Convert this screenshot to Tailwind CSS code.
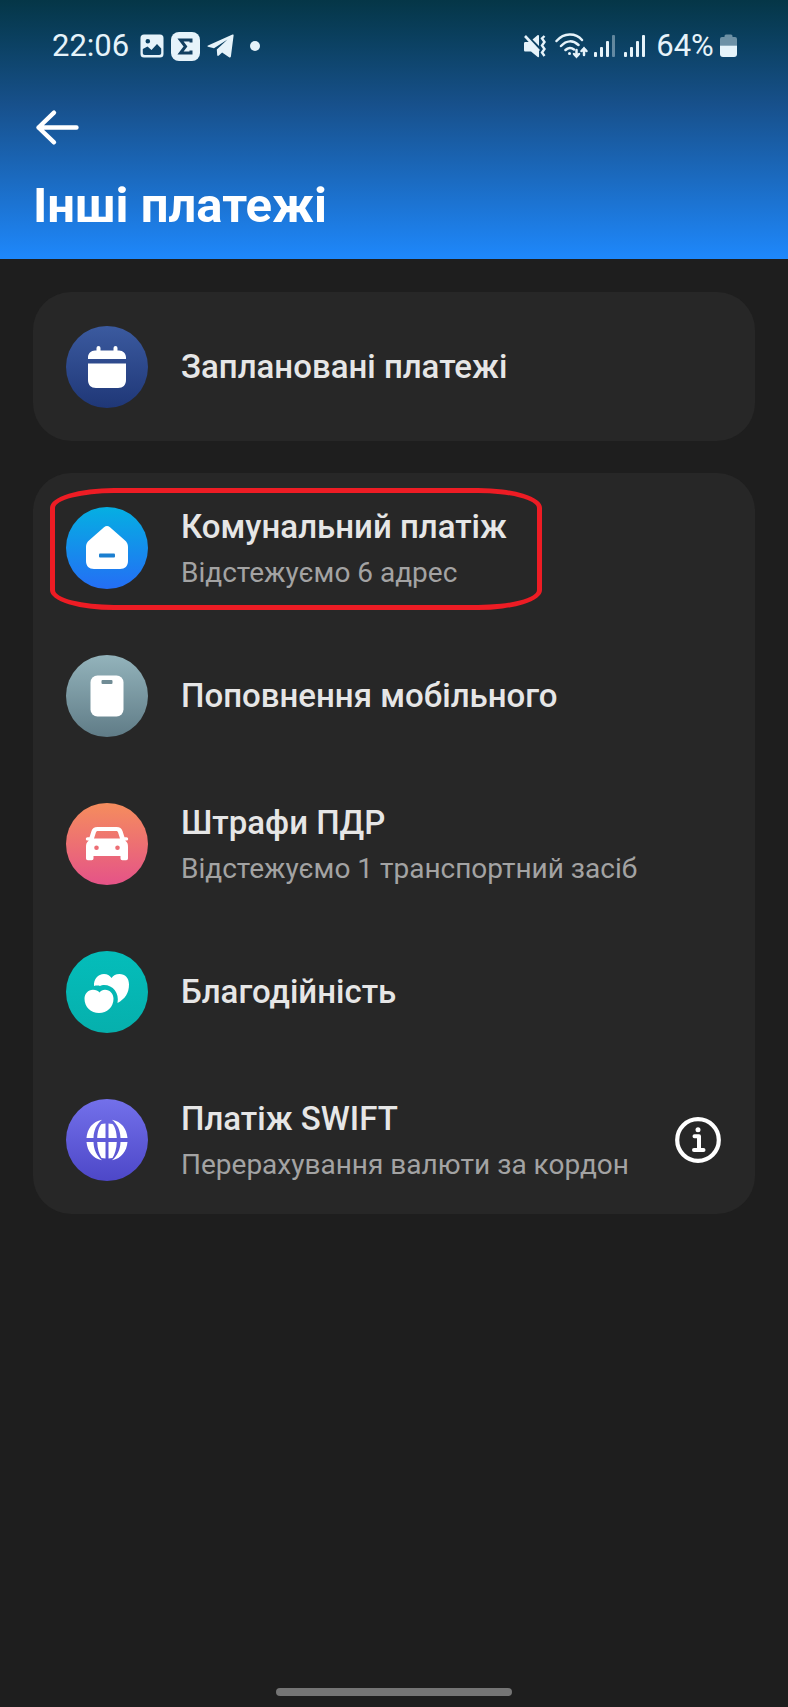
<!DOCTYPE html>
<html lang="uk">
<head>
<meta charset="utf-8">
<meta name="viewport" content="width=device-width, initial-scale=1">
<title>Інші платежі</title>
<script src="https://cdn.jsdelivr.net/npm/@tailwindcss/browser@4"></script>
</head>
<body class="flex min-h-screen flex-col bg-[#1e1e1e] font-[Roboto,sans-serif] text-[#e6e6e6]">

<header class="bg-linear-to-b from-[#053647] via-[#17508b] via-40% to-[#1e88fc] px-[33px] pb-[23px] text-white">
  <div class="flex h-[92px] items-center justify-between pr-[18px] pl-[19px] text-[#e6f3fa]">
    <div class="flex items-center">
      <span class="w-[88px] text-[31px] leading-9">22:06</span>
      <svg class="h-6 w-6" viewBox="0 0 24 24" aria-hidden="true"><path fill="currentColor" fill-rule="evenodd" d="M4 .5h16A3.500 3.500 0 0 1 23.500 4v16a3.500 3.500 0 0 1-3.500 3.500H4A3.500 3.500 0 0 1 .5 20V4A3.500 3.500 0 0 1 4 .5ZM7.800 5a2.300 2.300 0 1 0 .01 4.600A2.300 2.300 0 0 0 7.800 5ZM2.800 15v4c0 1.300.8 2 2 2h14.400c1.200 0 2-.7 2-2v-4.500L17 10l-5.500 6L7.500 12.500Z"/></svg>
      <span class="ml-[7px] flex h-[29px] w-[29px] items-center justify-center rounded-lg bg-current">
        <svg class="h-[19px] w-[19px]" viewBox="0 0 19 19" aria-hidden="true"><path d="M15 5.500V3H4.500l5 6.500-5 6.500H15v-2.500" fill="none" stroke="#123f60" stroke-width="3"/></svg>
      </span>
      <svg class="ml-[7px] h-6 w-[27px]" viewBox="0 0 27 24" fill="currentColor" aria-hidden="true"><path d="M1 11.500 25.500.6c.7-.3 1.300.2 1.100 1l-2.700 20.800c-.2 1-1 1.300-1.800.8l-7-4.600-3.200 2.900c-.9.700-1.600.4-1.700-.5L9.800 15.500 20.500 5.500 7 14.200 1 12.700c-.7-.3-.7-.9 0-1.200Z"/></svg>
      <span class="ml-4 h-[10px] w-[10px] rounded-full bg-current"></span>
    </div>
    <div class="flex items-center">
      <svg class="h-6 w-6" viewBox="0 0 24 24" fill="none" stroke="currentColor" aria-hidden="true"><path fill="currentColor" stroke="none" d="M1 9.500C1 8.500 1.500 8 2.500 8H7l9 9v5.500c0 .8-.7 1-1.300.5L8 17.500H2.500C1.500 17.500 1 17 1 16ZM9.500 5.500l5-4.200c.8-.6 1.500-.3 1.500.7v10Z"/><path d="m2 2 14 15" stroke-width="2.600"/><path d="M21.500 2 19 4.500 21.500 8 19 11.500l2.500 3.500-2.500 3.500 2.500 3.500" stroke-width="2.400"/></svg>
      <svg class="ml-2 h-[26px] w-[34px]" viewBox="0 0 34 26" fill="none" stroke="currentColor" stroke-width="2.500" stroke-linecap="round" aria-hidden="true"><path d="M1.500 8C9-.5 20.500-.5 27 7M6 13c5.500-6 12-6 17.500-1M10.500 17c2.500-2.500 6-2.500 8.500-.5"/><circle cx="14.500" cy="20.500" r="1.500" fill="currentColor" stroke="none"/><path d="M21.500 17v6.500m-2.500-2.500 2.500 2.700 2.500-2.700M29 22v-6.500m-2.500 2.500 2.500-2.700 2.500 2.700"/></svg>
      <svg class="ml-[5px] h-[22px] w-[21px]" viewBox="0 0 21 22" fill="currentColor" aria-hidden="true"><rect y="17" width="3" height="5" rx="1"/><rect x="6" y="12" width="3" height="10" rx="1"/><rect x="12" y="6" width="3" height="16" rx="1"/><rect x="18" width="3" height="22" rx="1" opacity=".4"/></svg>
      <svg class="ml-[9px] h-[22px] w-[21px]" viewBox="0 0 21 22" fill="currentColor" aria-hidden="true"><rect y="17" width="3" height="5" rx="1"/><rect x="6" y="12" width="3" height="10" rx="1"/><rect x="12" y="6" width="3" height="16" rx="1"/><rect x="18" width="3" height="22" rx="1"/></svg>
      <span class="ml-2 w-16 text-center text-[31px] leading-9">64%</span>
      <svg class="ml-[3px] h-6 w-[17px]" viewBox="0 0 17 24" fill="currentColor" aria-hidden="true"><path opacity=".45" d="M4.500 2A1.500 1.500 0 0 1 6 .5h5A1.500 1.500 0 0 1 12.500 2v1H15a2 2 0 0 1 2 2v6.500H0V5a2 2 0 0 1 2-2h2.500Z"/><path d="M0 11.500h17V20a3 3 0 0 1-3 3H3a3 3 0 0 1-3-3Z"/></svg>
    </div>
  </div>
  <button type="button" aria-label="Назад" class="mt-2 flex h-14 w-14 items-center">
    <svg class="h-12 w-12" viewBox="0 0 48 48" fill="none" stroke="currentColor" stroke-width="4.400" stroke-linecap="round" stroke-linejoin="round" aria-hidden="true"><path d="M43.500 23.500H5.500M21 8.700l-15.500 14.800L21 38.300"/></svg>
  </button>
  <h1 class="mt-5 text-[49px] leading-[60px] font-bold">Інші платежі</h1>
</header>

<main class="flex flex-1 flex-col gap-8 px-[33px] pt-[33px]">
  <section class="rounded-[38px] bg-[#272727] pt-px">
    <a href="#scheduled" class="flex h-[148px] items-center gap-[33px] px-[33px]">
      <svg class="h-[82px] w-[82px] shrink-0" viewBox="0 0 82 82" aria-hidden="true">
        <defs><linearGradient id="g1" x2="0" y2="1"><stop stop-color="#3b5a9f"/><stop offset="1" stop-color="#1f3777"/></linearGradient></defs>
        <circle cx="41" cy="41" r="41" fill="url(#g1)"/>
        <path fill="#fff" d="M22 33v-1.500c0-4 3-7 7-7h1.500V22a2 2 0 0 1 4 0v2.500h13V22a2 2 0 0 1 4 0v2.500H53c4 0 7 3 7 7V33ZM22 37.500h38V54c0 5-3 8-8 8H30c-5 0-8-3-8-8Z"/>
      </svg>
      <span class="text-[33px] leading-10 font-medium">Заплановані платежі</span>
    </a>
  </section>

  <section class="rounded-[38px] bg-[#272727] pt-px">
    <ul>
      <li class="relative">
        <a href="#utilities" class="flex h-[148px] items-center gap-[33px] px-[33px]">
          <svg class="h-[82px] w-[82px] shrink-0" viewBox="0 0 82 82" aria-hidden="true">
            <defs><linearGradient id="g2" x2="0" y2="1"><stop stop-color="#05afe2"/><stop offset="1" stop-color="#246ef5"/></linearGradient></defs>
            <circle cx="41" cy="41" r="41" fill="url(#g2)"/>
            <path fill="#fff" d="M38 20.300c2-1.700 4-1.700 6 0L58.500 33c2.500 2 3.500 4 3.500 7v14c0 5-3 8-8 8H28c-5 0-8-3-8-8V40c0-3 1-5 3.500-7Z"/>
            <rect x="33" y="46.500" width="16" height="4" rx="1" fill="#1b7fd0"/>
          </svg>
          <span class="flex flex-col gap-1.5 pt-1">
            <span class="text-[33px] leading-10 font-medium">Комунальний платіж</span>
            <span class="text-[28px] leading-10 text-[#a3a3a3]">Відстежуємо 6 адрес</span>
          </span>
        </a>
        <span class="pointer-events-none absolute top-[14px] left-[17px] h-[122px] w-[492px] rounded-[64px/20px] border-[5px] border-[#ed1c24]"></span>
      </li>
      <li>
        <a href="#mobile" class="flex h-[148px] items-center gap-[33px] px-[33px]">
          <svg class="h-[82px] w-[82px] shrink-0" viewBox="0 0 82 82" aria-hidden="true">
            <defs><linearGradient id="g3" x2="0" y2="1"><stop stop-color="#93b3bb"/><stop offset="1" stop-color="#607c87"/></linearGradient></defs>
            <circle cx="41" cy="41" r="41" fill="url(#g3)"/>
            <rect x="24.500" y="20.500" width="33" height="41" rx="7" fill="#fff"/>
            <rect x="35.500" y="25" width="11" height="4" rx="1" fill="#708c95"/>
          </svg>
          <span class="text-[33px] leading-10 font-medium">Поповнення мобільного</span>
        </a>
      </li>
      <li>
        <a href="#fines" class="flex h-[148px] items-center gap-[33px] px-[33px]">
          <svg class="h-[82px] w-[82px] shrink-0" viewBox="0 0 82 82" aria-hidden="true">
            <defs><linearGradient id="g4" x2="0" y2="1"><stop stop-color="#f58d5d"/><stop offset="1" stop-color="#e55388"/></linearGradient></defs>
            <circle cx="41" cy="41" r="41" fill="url(#g4)"/>
            <path fill="#fff" fill-rule="evenodd" d="M31.500 24h19c3.500 0 5 1.200 6 4l2 6.200H60.500a1.700 1.700 0 0 1 0 3.400h-1.300C61.500 39.500 62 41 62 44v11.500a1.800 1.800 0 0 1-1.800 1.800h-3.900a1.800 1.800 0 0 1-1.800-1.800V53h-27v2.500a1.800 1.800 0 0 1-1.800 1.800h-3.900a1.800 1.800 0 0 1-1.800-1.800V44c0-3 .5-4.500 2.800-6.400h-1.300a1.700 1.700 0 0 1 0-3.400h2L25.500 28c1-2.800 2.500-4 6-4ZM32 28c-1.200 0-1.800.5-2.100 1.500l-1.900 6h26l-1.900-6C51.800 28.500 51.200 28 50 28ZM30.500 42.500a2.300 2.300 0 1 0 .01 4.600 2.300 2.300 0 0 0-.01-4.600Zm21 0a2.300 2.300 0 1 0 .01 4.600 2.300 2.300 0 0 0-.01-4.600Z"/>
          </svg>
          <span class="flex flex-col gap-1.5 pt-1">
            <span class="text-[33px] leading-10 font-medium">Штрафи ПДР</span>
            <span class="text-[28px] leading-10 text-[#a3a3a3]">Відстежуємо 1 транспортний засіб</span>
          </span>
        </a>
      </li>
      <li>
        <a href="#charity" class="flex h-[148px] items-center gap-[33px] px-[33px]">
          <svg class="h-[82px] w-[82px] shrink-0" viewBox="0 0 82 82" aria-hidden="true">
            <defs><linearGradient id="g5" x2="0" y2="1"><stop stop-color="#04bdba"/><stop offset="1" stop-color="#06b0ad"/></linearGradient></defs>
            <circle cx="41" cy="41" r="41" fill="url(#g5)"/>
            <path fill="#fff" d="M28 35c-.5-7 4-12 10-12 3.500 0 5.500 1.500 7.500 4 2-2.500 4-4 8-4 5.500 0 9.500 4 9.500 10.500C63 42 59 48 51.500 52 53.500 42 47 34 38 34c-1.500 0-2.500.2-4 .9-1.500-.5-4-.6-6 .1Z"/>
            <path fill="#fff" d="M33.500 41.500c1.500-2 3-2.800 5.500-2.800 5 0 8.500 4 8.500 9C47.500 56 41 62 33 62S18.500 56 18.500 47.700c0-5 3.500-9 8.500-9 3 0 5 .8 6.500 2.800Z"/>
          </svg>
          <span class="text-[33px] leading-10 font-medium">Благодійність</span>
        </a>
      </li>
      <li class="flex items-center pr-[34px]">
        <a href="#swift" class="flex h-[148px] flex-1 items-center gap-[33px] pl-[33px]">
          <svg class="h-[82px] w-[82px] shrink-0" viewBox="0 0 82 82" aria-hidden="true">
            <defs><linearGradient id="g6" x2="0" y2="1"><stop stop-color="#7370ea"/><stop offset="1" stop-color="#4d47c8"/></linearGradient></defs>
            <circle cx="41" cy="41" r="41" fill="url(#g6)"/>
            <path fill="#fff" d="M39.500 24.500V39h-8.300c.3-6.500 2-11.500 4.300-14ZM42.500 24.500V39h8.300c-.3-6.500-2-11.500-4.300-14ZM39.500 59.500V43h-8.300c.3 7 2 12.500 4.300 16ZM42.500 59.500V43h8.300c-.3 7-2 12.500-4.300 16ZM20.500 39C21.300 30 26.500 22.500 36 20.800 30.500 25.500 27.800 31 27.500 39ZM61.500 39C60.700 30 55.500 22.500 46 20.800 51.500 25.500 54.200 31 54.500 39ZM20.500 43C21.300 52 26.500 59.500 36 61.200 30.500 56.500 27.800 51 27.500 43ZM61.500 43C60.700 52 55.500 59.500 46 61.200 51.500 56.500 54.200 51 54.500 43Z"/>
          </svg>
          <span class="flex flex-col gap-1.5 pt-1">
            <span class="text-[33px] leading-10 font-medium">Платіж SWIFT</span>
            <span class="text-[28px] leading-10 text-[#a3a3a3]">Перерахування валюти за кордон</span>
          </span>
        </a>
        <button type="button" aria-label="Інформація" class="shrink-0 text-white">
          <svg class="h-[46px] w-[46px]" viewBox="0 0 46 46" fill="none" stroke="currentColor" aria-hidden="true"><circle cx="23" cy="23" r="20.800" stroke-width="4.200"/><circle cx="23" cy="12.800" r="2.500" fill="currentColor" stroke="none"/><path d="M19.500 19.300H24V33M19 33h9.500" stroke-width="4" stroke-linecap="round" stroke-linejoin="round"/></svg>
        </button>
      </li>
    </ul>
  </section>
</main>

<footer class="flex justify-center pb-[11px]">
  <div class="h-2 w-[236px] rounded-full bg-[#757575]"></div>
</footer>
</body>
</html>
